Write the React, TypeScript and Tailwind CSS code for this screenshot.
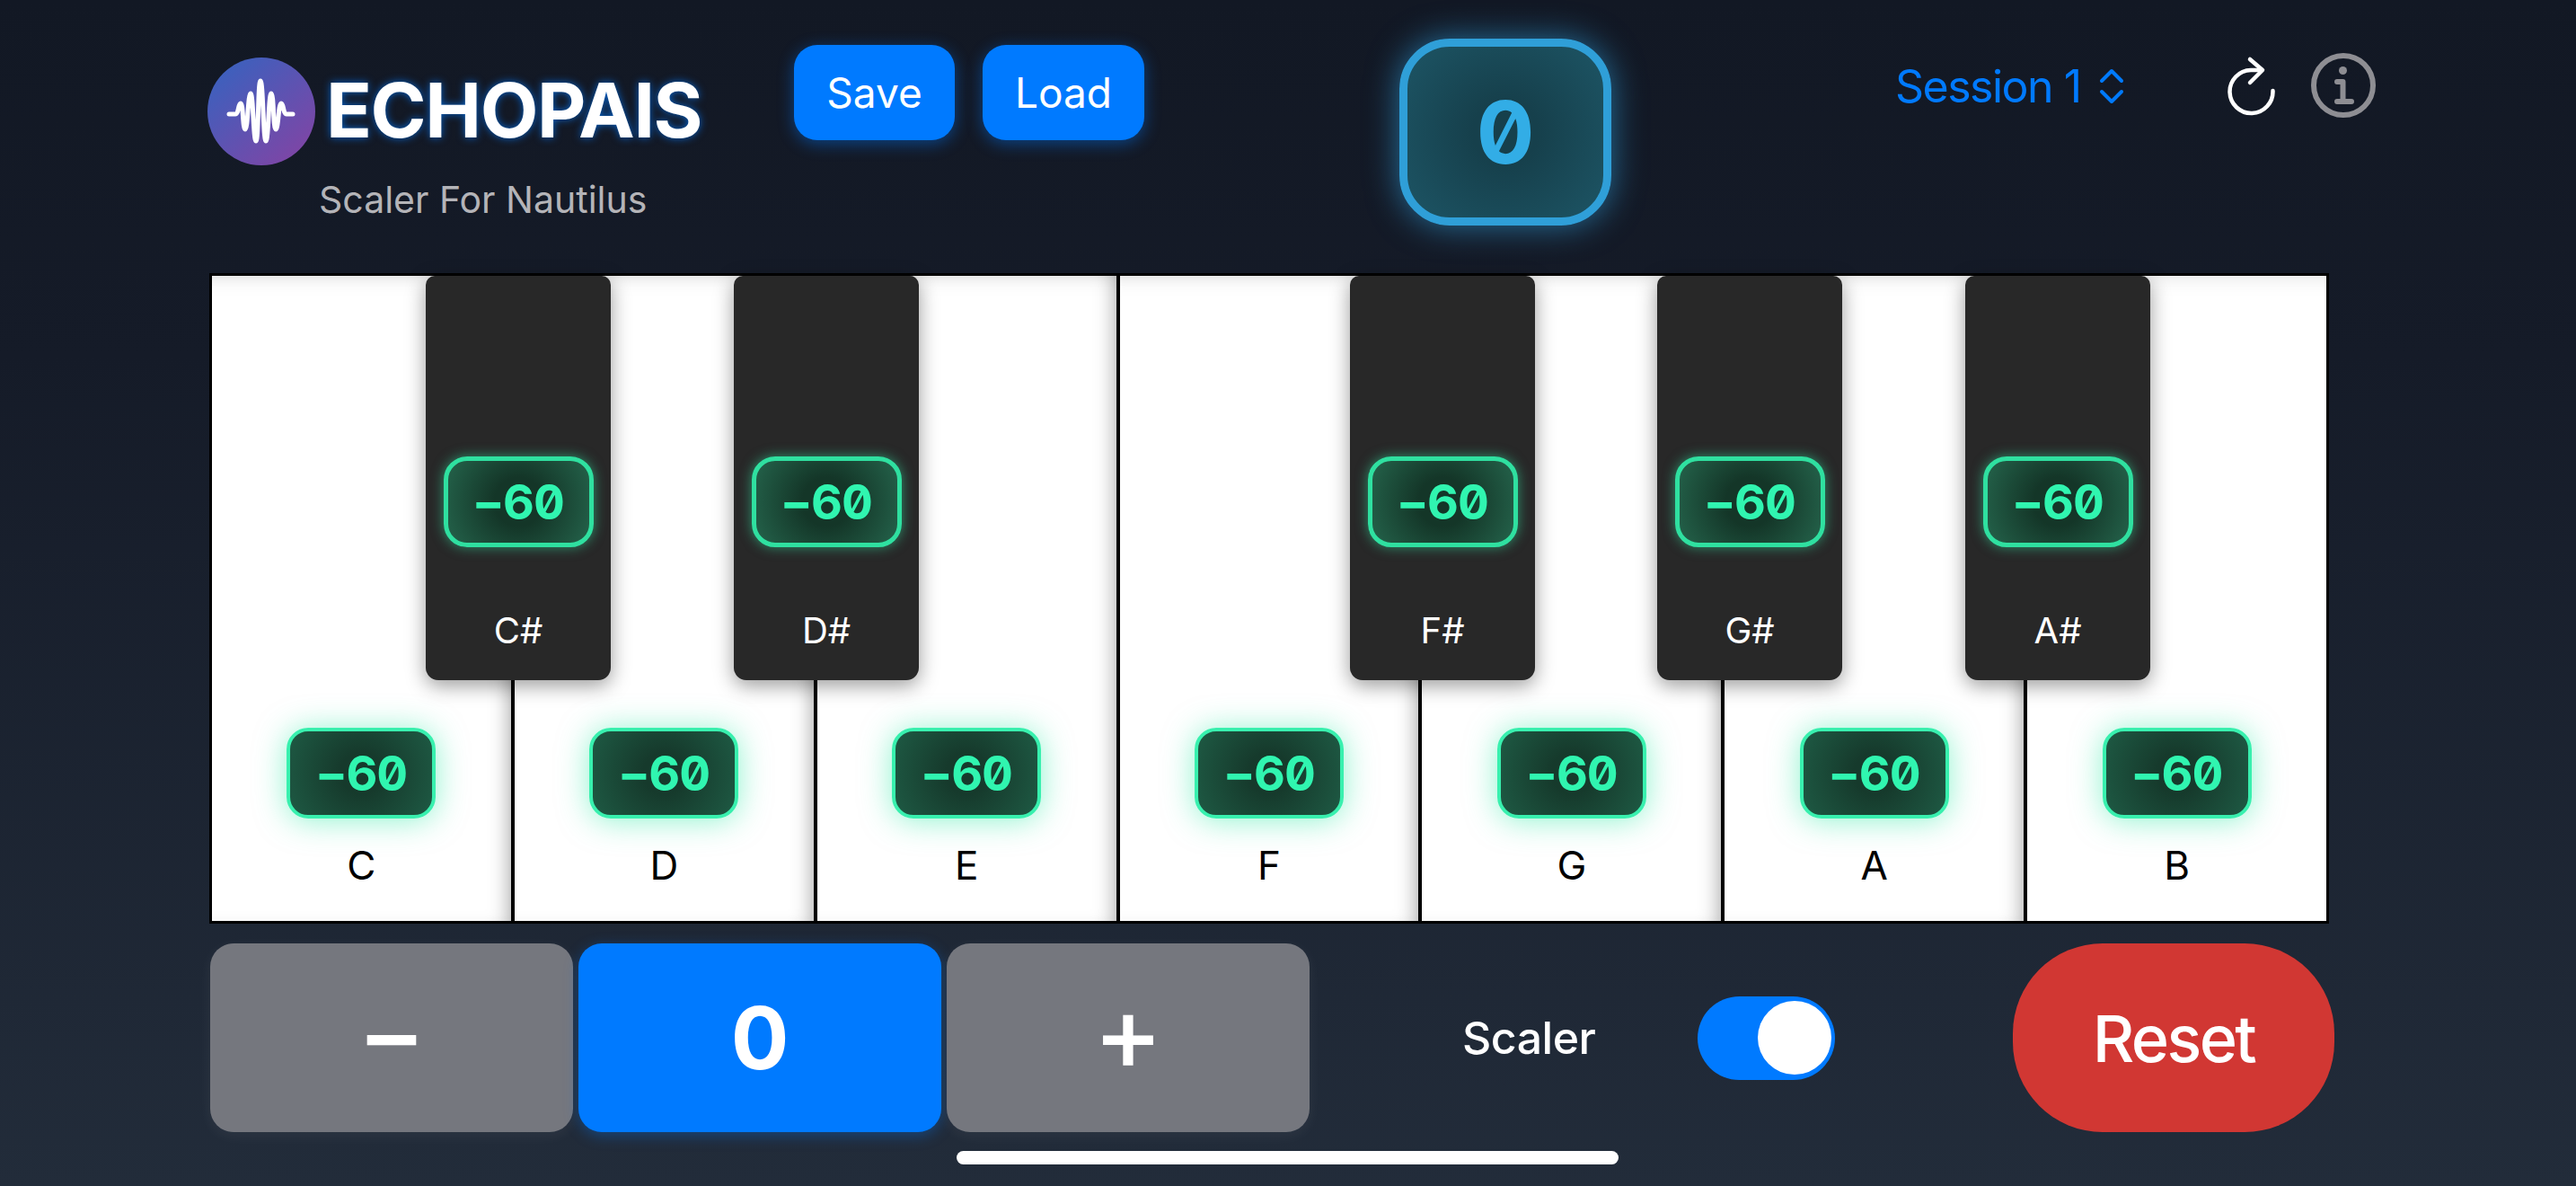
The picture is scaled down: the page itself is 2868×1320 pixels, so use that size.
const whiteKeys = ["C", "D", "E", "F", "G", "A", "B"];

const blackKeys = [
  { name: "C#", pos: "left-[238px]" },
  { name: "D#", pos: "left-[581px]" },
  { name: "F#", pos: "left-[1267px]" },
  { name: "G#", pos: "left-[1609px]" },
  { name: "A#", pos: "left-[1952px]" },
];

const Logo = () => (
  <svg viewBox="0 0 120 120" className="w-[120px] h-[120px] shrink-0">
    <defs>
      <linearGradient id="logoFill" x1="0.15" y1="0.1" x2="0.85" y2="0.9">
        <stop offset="0" stopColor="#3d60bd" />
        <stop offset="1" stopColor="#7d46a6" />
      </linearGradient>
    </defs>
    <circle cx="60" cy="60" r="60" fill="url(#logoFill)" />
    <path
      d="M24 63H31C35 63 34 51 37 51C40 51 39 80 42 80C45 80 45 40 48 40C51 40 51 93 54 93C57 93 56 26 59 26C62 26 62 93 65 93C68 93 68 40 71 40C74 40 73 80 76 80C79 80 79 51 82 51C85 51 84 63 88 63H95"
      fill="none"
      stroke="#fff"
      strokeWidth="5"
      strokeLinecap="round"
      strokeLinejoin="round"
    />
  </svg>
);

const Chevrons = () => (
  <svg viewBox="0 0 28 40" className="w-[28px] h-[40px]" fill="none" stroke="#007aff" strokeWidth="4" strokeLinecap="round" strokeLinejoin="round">
    <path d="M3 14L14 3L25 14" />
    <path d="M3 26L14 37L25 26" />
  </svg>
);

const RefreshIcon = () => (
  <svg viewBox="0 0 60 70" className="w-[60px] h-[70px]" fill="none" stroke="#fff" strokeWidth="4.5" strokeLinecap="round" strokeLinejoin="round">
    <path d="M50.5 41A24 24 0 1 1 26 18H38" />
    <path d="M25 6L39 18L25 32" />
  </svg>
);

const InfoIcon = () => (
  <svg viewBox="0 0 72 72" className="w-[72px] h-[72px]" fill="none" stroke="#8e8e93" strokeWidth="6" strokeLinecap="round" strokeLinejoin="round">
    <circle cx="36" cy="36" r="33" />
    <circle cx="35.5" cy="19.5" r="4.5" fill="#8e8e93" stroke="none" />
    <path d="M29 32H35.5V54M29 54H45" />
  </svg>
);

const WhiteBadge = () => (
  <div className="w-[166px] h-[101px] flex items-center justify-center rounded-[24px] border-[4px] border-[#38f0ae] bg-[radial-gradient(circle,#163a2c_25%,#1e5a44_100%)] shadow-[0_2px_34px_rgba(50,232,166,0.55)] slashed-zero tabular-nums font-bold text-[54px] tracking-[-1px] text-[#30f5b0]">
    −60
  </div>
);

const BlackBadge = () => (
  <div className="w-[167px] h-[101px] flex items-center justify-center rounded-[26px] border-[5px] border-[#2fe0a0] bg-[radial-gradient(circle,#143628_30%,#24634b_100%)] shadow-[0_0_14px_rgba(50,232,166,0.55)] slashed-zero tabular-nums font-bold text-[54px] tracking-[-1px] text-[#30f5b0]">
    −60
  </div>
);

export default function App() {
  return (
    <div className="w-[2868px] h-[1320px] overflow-hidden flex flex-col pl-[233px] bg-[linear-gradient(180deg,#121824_0%,#151b28_30%,#222c3a_100%)] font-['Inter',sans-serif]">
      <header className="h-[304px] flex items-start -ml-[2px]">
        <div className="w-[653px] pt-[64px] flex flex-col">
          <div className="flex items-center gap-[12px]">
            <Logo />
            <span className="text-[84px] leading-none font-bold tracking-[-1.4px] text-white [text-shadow:0_0_10px_rgba(0,122,255,0.75)] -mt-[2px]">ECHOPAIS</span>
          </div>
          <span className="ml-[124px] mt-[10px] text-[41px] leading-[56px] text-[#b4b4b8]">Scaler For Nautilus</span>
        </div>

        <div className="flex gap-[31px] mt-[50px]">
          <button className="w-[179px] h-[106px] rounded-[26px] bg-[#007aff] text-white text-[46px] shadow-[0_4px_18px_rgba(0,122,255,0.45)]">Save</button>
          <button className="w-[180px] h-[106px] rounded-[26px] bg-[#007aff] text-white text-[46px] shadow-[0_4px_18px_rgba(0,122,255,0.45)]">Load</button>
        </div>

        <div className="ml-[284px] mt-[43px] w-[236px] h-[208px] flex items-center justify-center rounded-[56px] border-[9px] border-[#2f9fd8] bg-[radial-gradient(circle,#16404c_25%,#1d5565_100%)] shadow-[0_0_36px_rgba(50,170,235,0.6)] slashed-zero font-bold text-[96px] text-[#32ade6]">
          0
        </div>

        <div className="ml-[316px] mt-[66px] h-[60px] flex items-center gap-[20px] text-[50px] tracking-[-1.5px] text-[#007aff]">
          <span>Session 1</span>
          <Chevrons />
        </div>

        <div className="ml-[115px] mt-[60px]">
          <RefreshIcon />
        </div>
        <div className="ml-[33px] mt-[59px]">
          <InfoIcon />
        </div>
      </header>

      <section className="relative flex w-[2360px] h-[724px] border-[3px] border-black bg-white">
        {whiteKeys.map((name, i) => (
          <div
            key={name}
            className={
              i < 6
                ? "flex-1 flex flex-col items-center justify-end pb-[40px] border-r-[4px] border-black shadow-[inset_-16px_0_22px_-14px_rgba(0,0,0,0.35),inset_0_24px_24px_-24px_rgba(0,0,0,0.12)]"
                : "flex-1 flex flex-col items-center justify-end pb-[40px] shadow-[inset_0_24px_24px_-24px_rgba(0,0,0,0.12)]"
            }
          >
            <WhiteBadge />
            <span className="mt-[30px] text-[44px] leading-[44px] text-black">{name}</span>
          </div>
        ))}
        {blackKeys.map((key) => (
          <div
            key={key.name}
            className={`absolute top-0 ${key.pos} w-[206px] h-[450px] flex flex-col items-center pt-[201px] rounded-t-[10px] rounded-b-[14px] bg-[#282828] shadow-[0_6px_22px_rgba(0,0,0,0.4)]`}
          >
            <BlackBadge />
            <span className="mt-[73px] text-[40px] leading-[40px] text-white">{key.name}</span>
          </div>
        ))}
      </section>

      <section className="mt-[22px] ml-[1px] flex items-center h-[210px]">
        <div className="flex gap-[6px]">
          <button className="w-[404px] h-[210px] pb-[12px] rounded-[26px] bg-[#75777e] text-white text-[116px] leading-none font-medium shadow-[0_4px_16px_rgba(255,255,255,0.06)]">−</button>
          <button className="w-[404px] h-[210px] rounded-[26px] bg-[#007aff] text-white text-[96px] font-bold shadow-[0_4px_16px_rgba(0,122,255,0.35)]">0</button>
          <button className="w-[404px] h-[210px] pb-[12px] rounded-[26px] bg-[#75777e] text-white text-[116px] leading-none font-medium shadow-[0_4px_16px_rgba(255,255,255,0.06)]">+</button>
        </div>
        <span className="ml-[170px] w-[148px] text-[50px] font-medium tracking-[-0.5px] text-white">Scaler</span>
        <div className="ml-[114px] w-[153px] h-[93px] flex items-center justify-end pr-[4px] rounded-full bg-[#007aff]">
          <div className="w-[82px] h-[82px] rounded-full bg-white" />
        </div>
        <button className="ml-[198px] w-[358px] h-[210px] pt-[2px] rounded-[100px] bg-[#d13733] text-white text-[72px] font-medium tracking-[-2.6px]">Reset</button>
      </section>

      <div className="mt-[21px] ml-[832px] w-[737px] h-[15px] rounded-full bg-white" />
    </div>
  );
}
